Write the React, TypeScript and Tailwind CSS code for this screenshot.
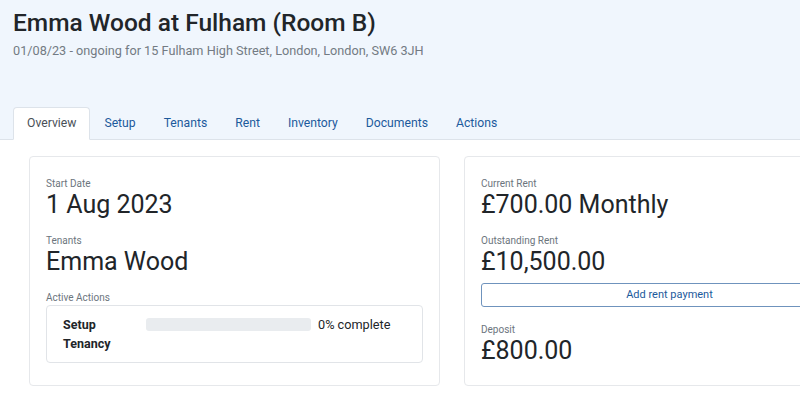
import React from "react";

const tabs = ["Overview", "Setup", "Tenants", "Rent", "Inventory", "Documents", "Actions"];

function Stat({ label, value }: { label: string; value: string }) {
  return (
    <div className="flex flex-col">
      <span className="text-[10px] leading-[14px] text-[#6c757d]">{label}</span>
      <span className="text-[25px] leading-[28px] text-[#212529]">{value}</span>
    </div>
  );
}

export default function App() {
  return (
    <div
      className="w-[800px] h-[416px] overflow-hidden bg-white text-[#212529]"
      style={{ fontFamily: "Roboto, 'Liberation Sans', sans-serif" }}
    >
      <div className="bg-[#f0f6fd] border-b border-[#dde3ea] pl-[13px]">
        <h1 className="text-[24.5px] leading-[34px] pt-[6px] font-medium text-[#212529]">
          Emma Wood at Fulham (Room B)
        </h1>
        <p className="text-[12.7px] leading-[18px] mt-[2px] text-[#737b83]">
          01/08/23 - ongoing for 15 Fulham High Street, London, London, SW6 3JH
        </p>
        <nav className="flex mt-[47px] -mb-px">
          {tabs.map((t, i) => (
            <div
              key={t}
              className={
                i === 0
                  ? "h-[33px] px-[13px] flex items-center text-[12.2px] text-[#495057] bg-white border border-[#dde3ea] border-b-white rounded-t-[4px]"
                  : "h-[33px] px-[13px] flex items-center text-[12.2px] text-[#1c5a9c] border border-transparent"
              }
            >
              {t}
            </div>
          ))}
        </nav>
      </div>

      <div className="grid grid-cols-[411px_411px] gap-[24px] pl-[29px] pt-[16px]">
        <div className="border border-[#e6e8eb] rounded-[4px] px-[16px] pt-[20px] pb-[20px] flex flex-col gap-[15px]">
          <Stat label="Start Date" value="1 Aug 2023" />
          <Stat label="Tenants" value="Emma Wood" />
          <div className="flex flex-col">
            <span className="text-[10px] leading-[14px] text-[#6c757d]">Active Actions</span>
            <div className="border border-[#e1e4e8] rounded-[4px] px-[16px] py-[9px] flex items-start">
              <div className="w-[83px] text-[12.5px] leading-[19px] font-bold text-[#212529]">
                Setup
                <br />
                Tenancy
              </div>
              <div className="mt-[3px] w-[165px] h-[13px] rounded-[3px] bg-[#e9ecef]" />
              <span className="ml-[7px] text-[12.7px] leading-[19px] text-[#212529]">0% complete</span>
            </div>
          </div>
        </div>

        <div className="border border-[#e6e8eb] rounded-[4px] px-[16px] pt-[20px] pb-[20px] flex flex-col gap-[15px]">
          <Stat label="Current Rent" value="£700.00 Monthly" />
          <div className="flex flex-col">
            <Stat label="Outstanding Rent" value="£10,500.00" />
            <button className="mt-[7px] h-[24px] border border-[#6f93bd] rounded-[3px] text-[11px] text-[#1c5a9c] bg-white">
              Add rent payment
            </button>
          </div>
          <div className="mt-[1px]">
            <Stat label="Deposit" value="£800.00" />
          </div>
        </div>
      </div>
    </div>
  );
}
